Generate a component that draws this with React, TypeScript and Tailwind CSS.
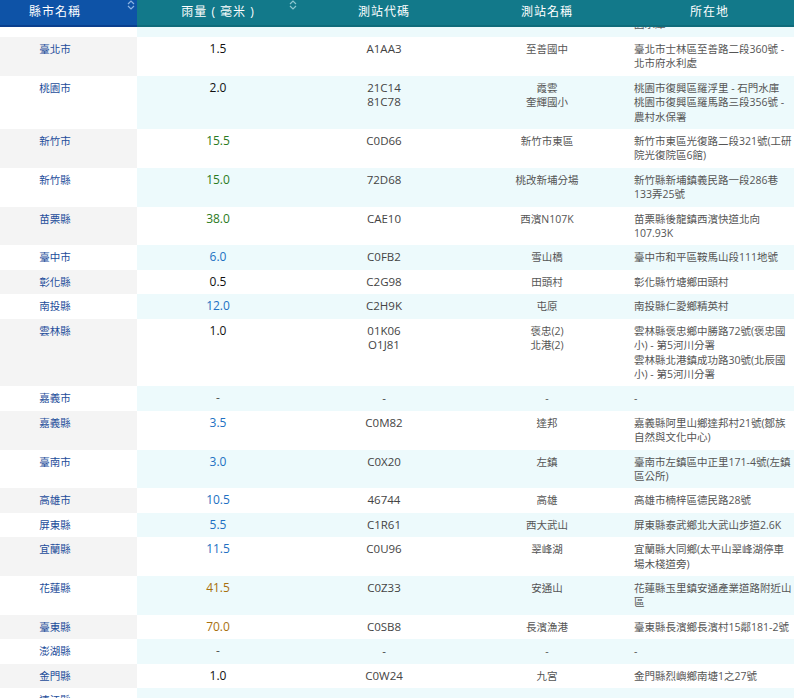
type Row = {
  county: string;
  rain: string;
  codes: string[];
  stations: string[];
  address: string[];
};

const rows: Row[] = [
  { county: "臺北市", rain: "1.5", codes: ["A1AA3"], stations: ["至善國中"], address: ["臺北市士林區至善路二段360號 -", "北市府水利處"] },
  { county: "桃園市", rain: "2.0", codes: ["21C14", "81C78"], stations: ["霞雲", "奎輝國小"], address: ["桃園市復興區羅浮里 - 石門水庫", "桃園市復興區羅馬路三段356號 -", "農村水保署"] },
  { county: "新竹市", rain: "15.5", codes: ["C0D66"], stations: ["新竹市東區"], address: ["新竹市東區光復路二段321號(工研", "院光復院區6館)"] },
  { county: "新竹縣", rain: "15.0", codes: ["72D68"], stations: ["桃改新埔分場"], address: ["新竹縣新埔鎮義民路一段286巷", "133弄25號"] },
  { county: "苗栗縣", rain: "38.0", codes: ["CAE10"], stations: ["西濱N107K"], address: ["苗栗縣後龍鎮西濱快道北向", "107.93K"] },
  { county: "臺中市", rain: "6.0", codes: ["C0FB2"], stations: ["雪山橋"], address: ["臺中市和平區鞍馬山段111地號"] },
  { county: "彰化縣", rain: "0.5", codes: ["C2G98"], stations: ["田頭村"], address: ["彰化縣竹塘鄉田頭村"] },
  { county: "南投縣", rain: "12.0", codes: ["C2H9K"], stations: ["屯原"], address: ["南投縣仁愛鄉精英村"] },
  { county: "雲林縣", rain: "1.0", codes: ["01K06", "O1J81"], stations: ["褒忠(2)", "北港(2)"], address: ["雲林縣褒忠鄉中勝路72號(褒忠國", "小) - 第5河川分署", "雲林縣北港鎮成功路30號(北辰國", "小) - 第5河川分署"] },
  { county: "嘉義市", rain: "-", codes: ["-"], stations: ["-"], address: ["-"] },
  { county: "嘉義縣", rain: "3.5", codes: ["C0M82"], stations: ["達邦"], address: ["嘉義縣阿里山鄉達邦村21號(鄒族", "自然與文化中心)"] },
  { county: "臺南市", rain: "3.0", codes: ["C0X20"], stations: ["左鎮"], address: ["臺南市左鎮區中正里171-4號(左鎮", "區公所)"] },
  { county: "高雄市", rain: "10.5", codes: ["46744"], stations: ["高雄"], address: ["高雄市楠梓區德民路28號"] },
  { county: "屏東縣", rain: "5.5", codes: ["C1R61"], stations: ["西大武山"], address: ["屏東縣泰武鄉北大武山步道2.6K"] },
  { county: "宜蘭縣", rain: "11.5", codes: ["C0U96"], stations: ["翠峰湖"], address: ["宜蘭縣大同鄉(太平山翠峰湖停車", "場木棧道旁)"] },
  { county: "花蓮縣", rain: "41.5", codes: ["C0Z33"], stations: ["安通山"], address: ["花蓮縣玉里鎮安通產業道路附近山", "區"] },
  { county: "臺東縣", rain: "70.0", codes: ["C0SB8"], stations: ["長濱漁港"], address: ["臺東縣長濱鄉長濱村15鄰181-2號"] },
  { county: "澎湖縣", rain: "-", codes: ["-"], stations: ["-"], address: ["-"] },
  { county: "金門縣", rain: "1.0", codes: ["C0W24"], stations: ["九宮"], address: ["金門縣烈嶼鄉南塘1之27號"] },
  { county: "連江縣", rain: "-", codes: ["-"], stations: ["-"], address: ["-"] },
];

function rainColor(v: string) {
  const n = parseFloat(v);
  if (isNaN(n)) return "text-[#555]";
  if (n >= 40) return "text-[#a8700f]";
  if (n >= 15) return "text-[#2b7a22]";
  if (n >= 3) return "text-[#2270c2]";
  return "text-[#111]";
}

function SortIcon({ color }: { color: string }) {
  return (
    <svg width="8" height="10" viewBox="0 0 8 10">
      <path d="M1 4 L4 1 L7 4" fill="none" stroke={color} strokeWidth="1.2" />
      <path d="M1 6 L4 9 L7 6" fill="none" stroke={color} strokeWidth="1.2" />
    </svg>
  );
}

const grid = "grid grid-cols-[137px_162px_170px_156px_169px]";

export default function App() {
  return (
    <div className="h-[698px] w-[800px] overflow-hidden bg-white font-['Open_Sans','Noto_Sans_CJK_TC',sans-serif]">
      <div className="w-[794px]">
        {/* header */}
        <div className={`${grid} h-[27px] text-[12px] tracking-[1px] text-white`}>
          <div className="relative flex items-center justify-center border-b-2 border-[#0a3f8e] bg-[#0e53a7] pb-[2px] pr-[27px]">
            縣市名稱
            <span className="absolute right-[2px] top-0 h-[10px] w-[8px]">
              <SortIcon color="#8db3e2" />
            </span>
          </div>
          <div className="relative flex items-center justify-center border-b-2 border-[#0f6c7b] bg-[#12798a] pb-[2px]">
            雨量 ( 毫米 )
            <span className="absolute right-[2px] top-0 h-[10px] w-[8px]">
              <SortIcon color="#8cc7cf" />
            </span>
          </div>
          <div className="flex items-center justify-center border-b-2 border-[#0f6c7b] bg-[#12798a] pb-[2px]">測站代碼</div>
          <div className="flex items-center justify-center border-b-2 border-[#0f6c7b] bg-[#12798a] pb-[2px]">測站名稱</div>
          <div className="flex items-center justify-center border-b-2 border-[#0f6c7b] bg-[#12798a] pb-[2px]">所在地</div>
        </div>

        {/* partially scrolled row */}
        <div className={`${grid} h-[10px] overflow-hidden`}>
          <div className="bg-white" />
          <div className="bg-[#edfafc]" />
          <div className="bg-[#edfafc]" />
          <div className="bg-[#edfafc]" />
          <div className="bg-[#edfafc] pl-[9px] text-[10.5px] leading-[14.5px] text-[#555]">
            <div className="-mt-[10px]">園水庫</div>
          </div>
        </div>

        {rows.map((r, i) => {
          const odd = i % 2 === 0;
          const rest = odd ? "bg-white" : "bg-[#edfafc]";
          return (
            <div key={r.county} className={`${grid} leading-[14.4px]`}>
              <div className={`${odd ? "bg-[#f4f4f4]" : "bg-white"} py-[5px] pr-[27px] text-center text-[10.5px] text-[#1c4c9a]`}>
                {r.county}
              </div>
              <div className={`${rest} py-[5px] text-center text-[12px] ${rainColor(r.rain)}`}>{r.rain}</div>
              <div className={`${rest} py-[5px] text-center text-[11.5px] text-[#444]`}>
                {r.codes.map((c) => (
                  <div key={c}>{c}</div>
                ))}
              </div>
              <div className={`${rest} py-[5px] text-center text-[10.5px] text-[#555]`}>
                {r.stations.map((s) => (
                  <div key={s}>{s}</div>
                ))}
              </div>
              <div className={`${rest} whitespace-nowrap py-[5px] pl-[9px] text-[10.5px] text-[#555]`}>
                {r.address.map((a, j) => (
                  <div key={j}>{a}</div>
                ))}
              </div>
            </div>
          );
        })}
      </div>
    </div>
  );
}
